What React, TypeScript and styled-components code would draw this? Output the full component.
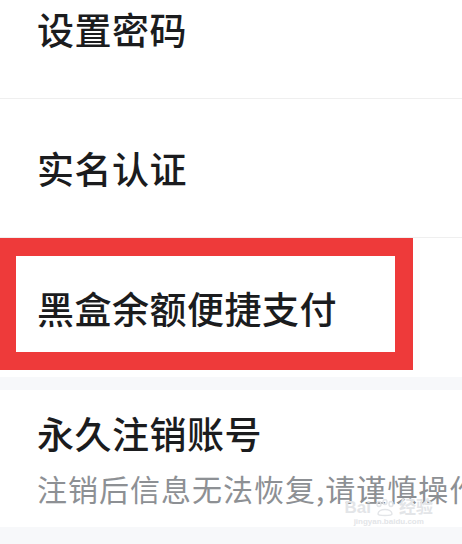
import styled, { createGlobalStyle } from 'styled-components';

const GlobalStyle = createGlobalStyle`
  html, body {
    margin: 0;
    padding: 0;
    background: #f7f8fa;
    overflow: hidden;
  }
  body {
    font-family: "Noto Sans CJK SC", "Noto Sans", sans-serif;
  }
`;

const Page = styled.div`
  width: 462px;
  height: 544px;
  overflow: hidden;
  background: #f7f8fa;
`;

const Group = styled.div<{ offset?: number }>`
  background: #ffffff;
  margin-top: ${p => p.offset ?? 0}px;
  display: flex;
  flex-direction: column;
`;

const Row = styled.div<{ divider?: boolean }>`
  position: relative;
  height: 139px;
  box-sizing: border-box;
  padding-left: 37px;
  display: flex;
  align-items: center;
  border-bottom: ${p => (p.divider ? '1px solid #efefef' : 'none')};
`;

const TallRow = styled.div`
  position: relative;
  height: 137px;
  box-sizing: border-box;
  padding: 20px 0 0 37px;
  display: flex;
  flex-direction: column;
  gap: 12px;
  white-space: nowrap;
`;

const Title = styled.span`
  font-size: 37px;
  font-weight: 500;
  color: #1b1c1e;
  line-height: 46px;
  letter-spacing: 0.5px;
`;

const Sub = styled.span`
  font-size: 30px;
  color: #8d9094;
  line-height: 40px;
  letter-spacing: 1px;
`;

const Highlight = styled.div`
  position: absolute;
  left: -2px;
  top: 0;
  width: 415px;
  height: 132px;
  box-sizing: border-box;
  border: 18px solid #ee3a3a;
  pointer-events: none;
`;

const Gap = styled.div`
  height: 13px;
`;

const Watermark = styled.div`
  position: absolute;
  right: 29px;
  bottom: 0;
  display: flex;
  flex-direction: column;
  align-items: center;
  color: #e3e5e8;
  font-family: "Liberation Sans", "Noto Sans CJK SC", sans-serif;
`;

const MarkTop = styled.div`
  display: flex;
  align-items: center;
  gap: 2px;
  font-size: 17px;
  font-weight: 700;
  line-height: 18px;
`;

const MarkUrl = styled.div`
  font-size: 8px;
  line-height: 10px;
  font-weight: 700;
`;

const Paw = () => (
  <svg width="24" height="18" viewBox="0 0 24 18">
    <g fill="none" stroke="#e3e5e8" strokeWidth="1.4">
      <ellipse cx="6" cy="5" rx="2" ry="2.5" />
      <ellipse cx="12" cy="3" rx="2" ry="2.5" />
      <ellipse cx="18" cy="5" rx="2" ry="2.5" />
      <path d="M5 15 C5 9 19 9 19 15 C19 17 5 17 5 15 Z" />
    </g>
  </svg>
);

export default function App() {
  return (
    <Page>
      <GlobalStyle />
      <Group offset={-40}>
        <Row divider>
          <Title>设置密码</Title>
        </Row>
        <Row divider>
          <Title>实名认证</Title>
        </Row>
        <Row>
          <Title>黑盒余额便捷支付</Title>
          <Highlight />
        </Row>
      </Group>
      <Gap />
      <Group>
        <TallRow>
          <Title>永久注销账号</Title>
          <Sub>注销后信息无法恢复,请谨慎操作</Sub>
          <Watermark>
            <MarkTop>
              Bai
              <Paw />
              经验
            </MarkTop>
            <MarkUrl>jingyan.baidu.com</MarkUrl>
          </Watermark>
        </TallRow>
      </Group>
    </Page>
  );
}
